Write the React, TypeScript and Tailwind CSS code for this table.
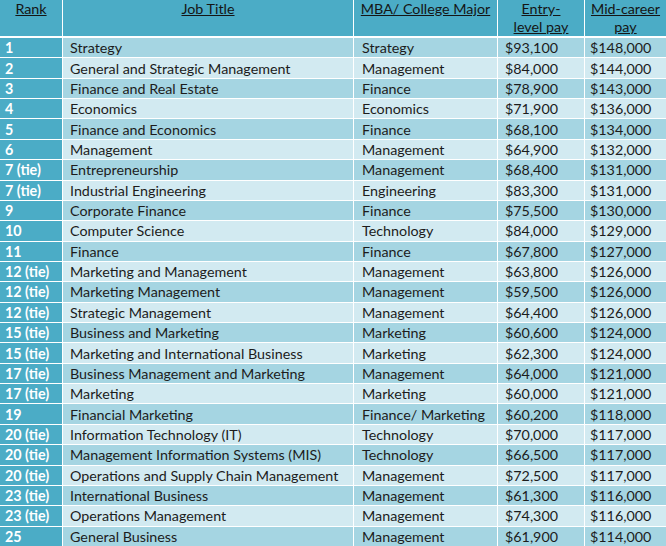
const rows: [string, string, string, string, string][] = [
  ["1", "Strategy", "Strategy", "$93,100", "$148,000"],
  ["2", "General and Strategic Management", "Management", "$84,000", "$144,000"],
  ["3", "Finance and Real Estate", "Finance", "$78,900", "$143,000"],
  ["4", "Economics", "Economics", "$71,900", "$136,000"],
  ["5", "Finance and Economics", "Finance", "$68,100", "$134,000"],
  ["6", "Management", "Management", "$64,900", "$132,000"],
  ["7 (tie)", "Entrepreneurship", "Management", "$68,400", "$131,000"],
  ["7 (tie)", "Industrial Engineering", "Engineering", "$83,300", "$131,000"],
  ["9", "Corporate Finance", "Finance", "$75,500", "$130,000"],
  ["10", "Computer Science", "Technology", "$84,000", "$129,000"],
  ["11", "Finance", "Finance", "$67,800", "$127,000"],
  ["12 (tie)", "Marketing and Management", "Management", "$63,800", "$126,000"],
  ["12 (tie)", "Marketing Management", "Management", "$59,500", "$126,000"],
  ["12 (tie)", "Strategic Management", "Management", "$64,400", "$126,000"],
  ["15 (tie)", "Business and Marketing", "Marketing", "$60,600", "$124,000"],
  ["15 (tie)", "Marketing and International Business", "Marketing", "$62,300", "$124,000"],
  ["17 (tie)", "Business Management and Marketing", "Management", "$64,000", "$121,000"],
  ["17 (tie)", "Marketing", "Marketing", "$60,000", "$121,000"],
  ["19", "Financial Marketing", "Finance/ Marketing", "$60,200", "$118,000"],
  ["20 (tie)", "Information Technology  (IT)", "Technology", "$70,000", "$117,000"],
  ["20 (tie)", "Management Information Systems (MIS)", "Technology", "$66,500", "$117,000"],
  ["20 (tie)", "Operations and Supply Chain Management", "Management", "$72,500", "$117,000"],
  ["23 (tie)", "International Business", "Management", "$61,300", "$116,000"],
  ["23 (tie)", "Operations Management", "Management", "$74,300", "$116,000"],
  ["25", "General Business", "Management", "$61,900", "$114,000"],
];

const headers = [["Rank"], ["Job Title"], ["MBA/ College Major"], ["Entry-", "level pay"], ["Mid-career", "pay"]];

const cols = "grid grid-cols-[62px_290px_143px_86px_81px] gap-x-px";

export default function App() {
  return (
    <main className="w-[666px] h-[546px] overflow-hidden bg-white font-['Lato','Liberation_Sans',sans-serif] text-[14.3px] leading-[17px] text-[#1c1c1c]">
      <div className={`${cols} h-[34px]`}>
        {headers.map((h) => (
          <div key={h[0]} className="flex flex-col items-center bg-[#4bacc6] leading-[18px] text-[#151515]">
            {h.map((line) => (
              <span key={line} className="underline">{line}</span>
            ))}
          </div>
        ))}
      </div>
      <div className="mt-[4px] grid h-[508px] grid-rows-[repeat(25,minmax(0,1fr))] gap-y-px">
        {rows.map((r, idx) => {
          const bg = idx % 2 === 0 ? "bg-[#a5d5e2]" : "bg-[#d2eaf1]";
          return (
            <div key={idx} className={cols}>
              <div className="flex items-center bg-[#4bacc6] pl-[5px] font-bold text-white">{r[0]}</div>
              <div className={`flex items-center pl-[7px] ${bg}`}>{r[1]}</div>
              <div className={`flex items-center pl-[8px] ${bg}`}>{r[2]}</div>
              <div className={`flex items-center pl-[7px] ${bg}`}>{r[3]}</div>
              <div className={`flex items-center pl-[5px] ${bg}`}>{r[4]}</div>
            </div>
          );
        })}
      </div>
    </main>
  );
}
